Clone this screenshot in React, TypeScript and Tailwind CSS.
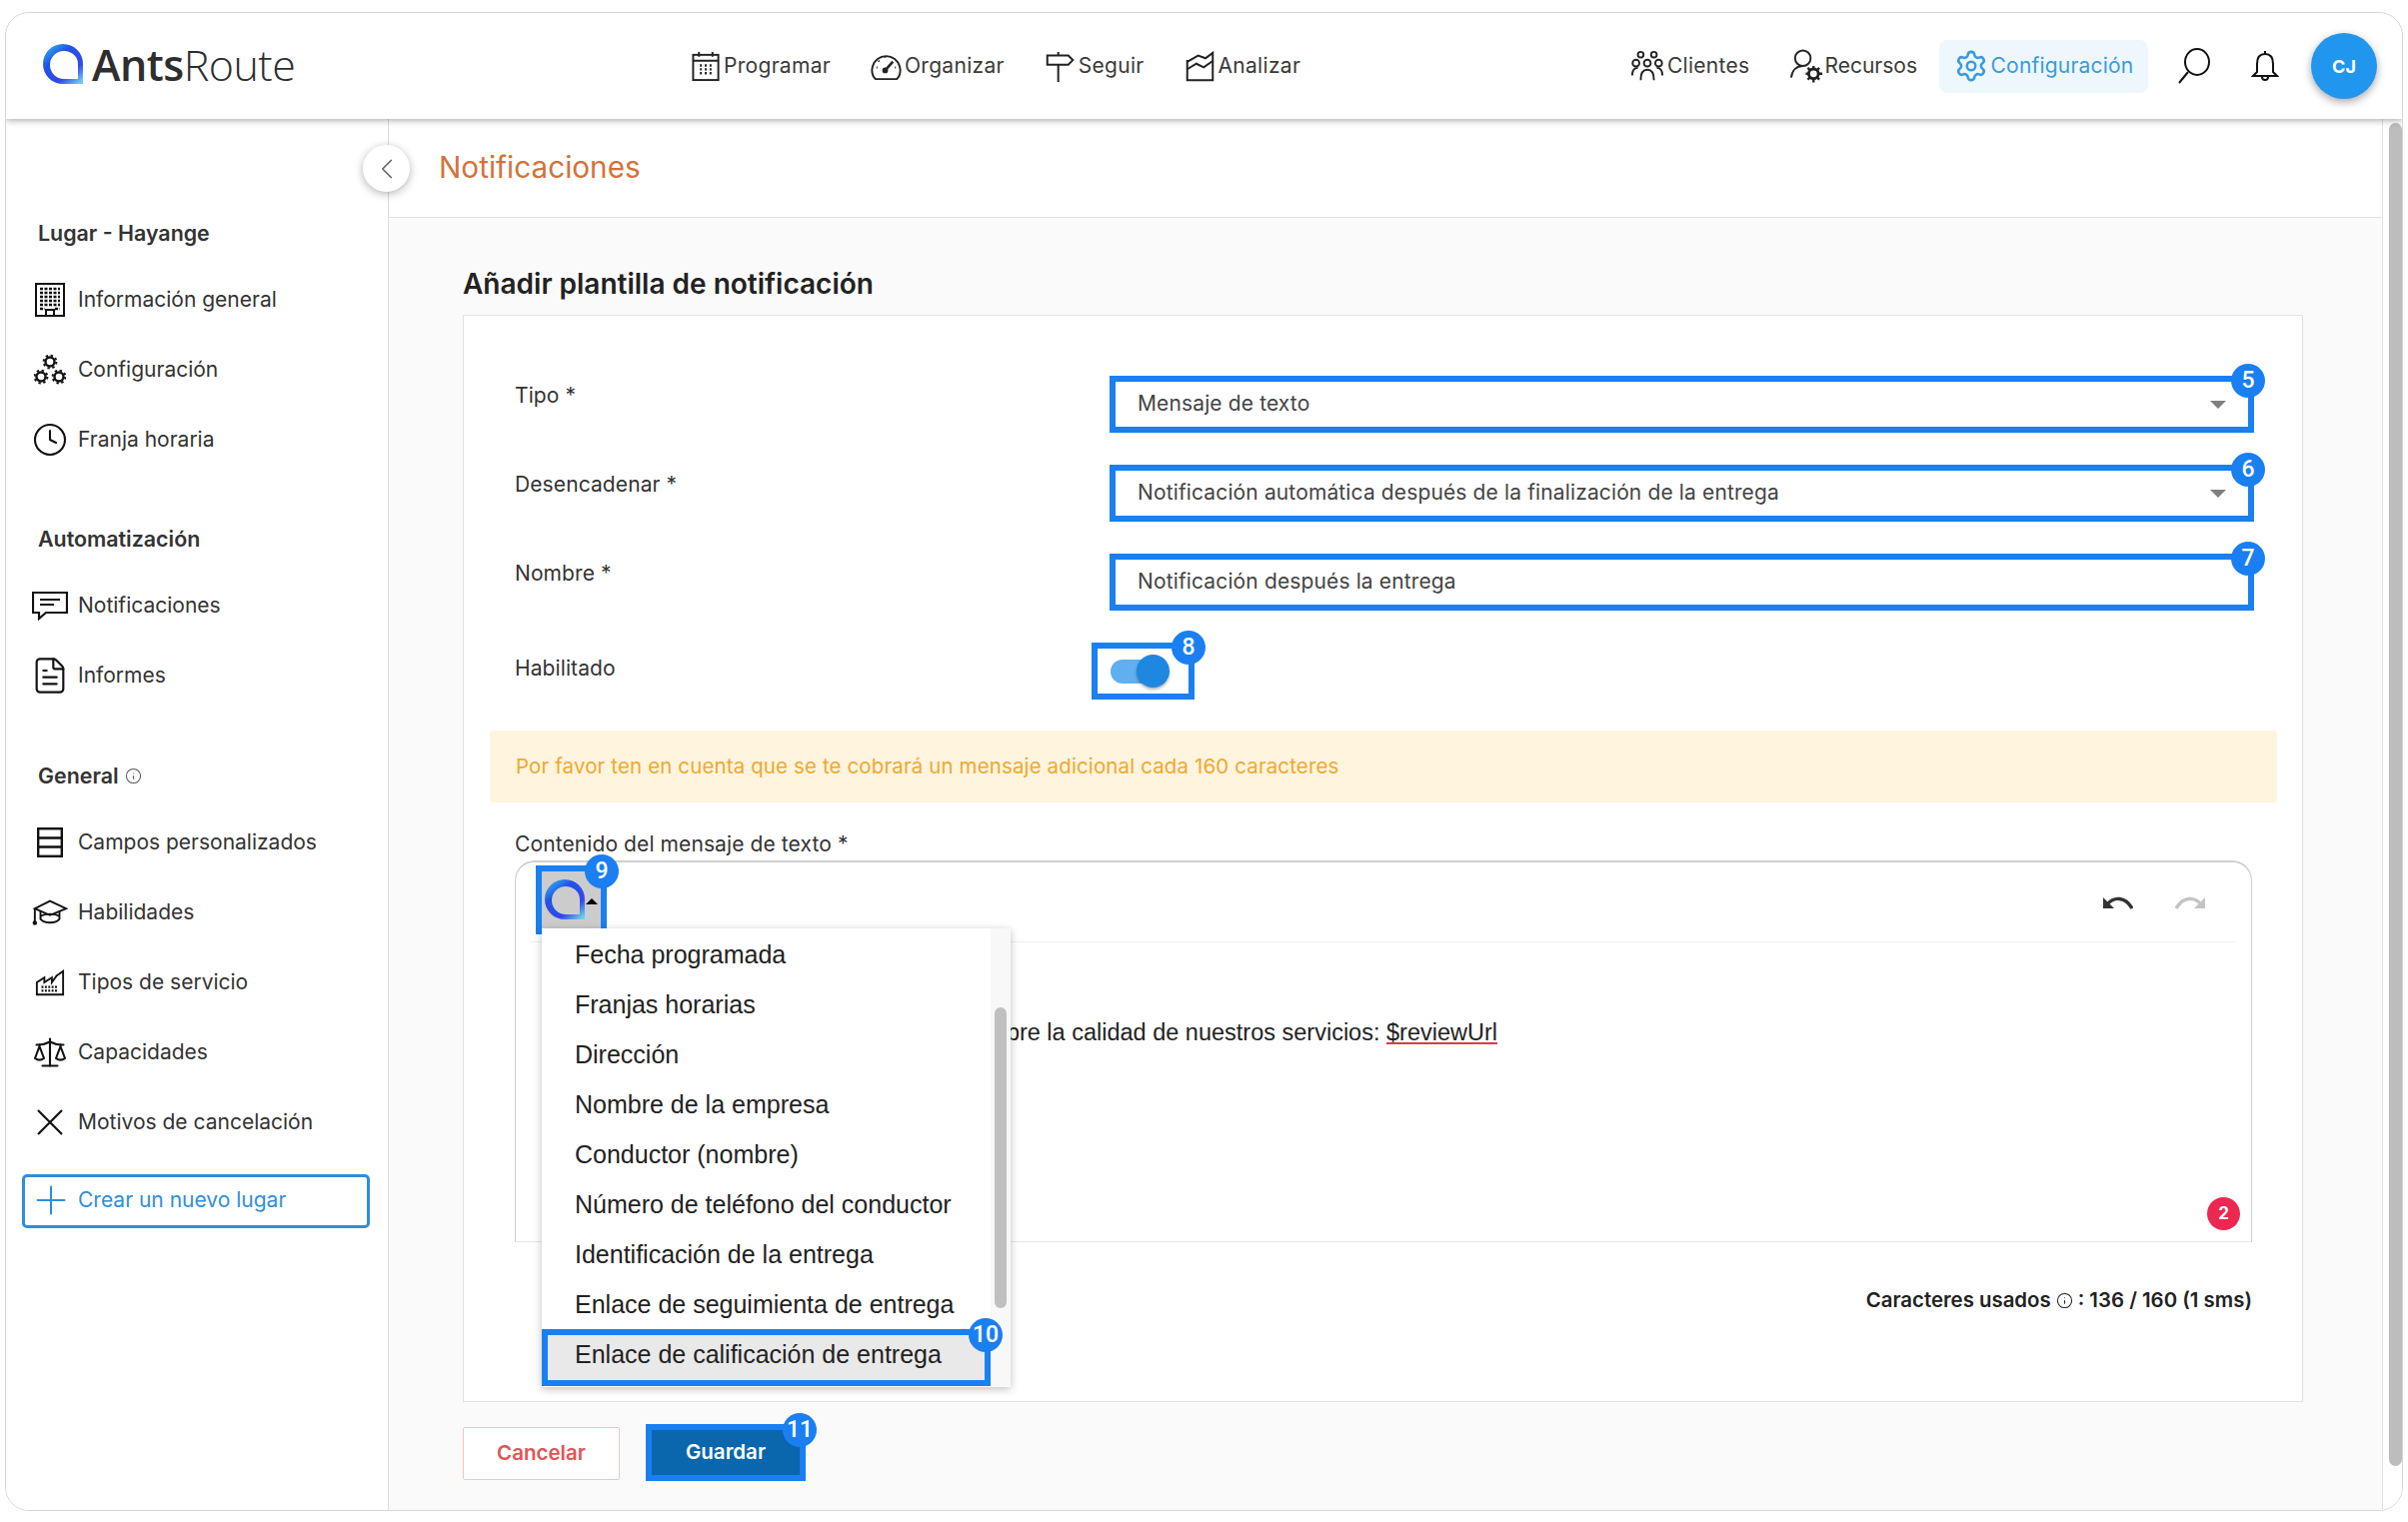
import { ChevronLeft, Clock, FileText, Info, Plus, Scale, Settings } from "lucide-react";
import type { ReactNode } from "react";

function LogoMark({ className, id }: { className: string; id: string }) {
  return (
    <svg viewBox="0 0 40 41" className={className}>
      <defs>
        <linearGradient id={id} x1="0.1" y1="0" x2="0.9" y2="1">
          <stop offset="0" stopColor="#2cc0ee" />
          <stop offset="0.32" stopColor="#2452e6" />
          <stop offset="0.72" stopColor="#3248ea" />
          <stop offset="1" stopColor="#6fd0f0" />
        </linearGradient>
      </defs>
      <path
        fillRule="evenodd"
        fill={`url(#${id})`}
        d="M20 0 A20 20 0 0 1 40 20 V40 H20 A20 20 0 0 1 20 0 Z M21 7 A13.5 13.5 0 0 0 21 35 H35 V20 A14 13 0 0 0 21 7 Z"
      />
    </svg>
  );
}

function Badge({ n, className }: { n: string; className: string }) {
  return (
    <span className={`absolute z-20 flex h-[34px] w-[34px] items-center justify-center rounded-full bg-[#1a7ff0] font-['Roboto',sans-serif] text-[23px] font-medium tracking-normal text-white ${className}`}>
      {n}
    </span>
  );
}

function NavItem({ icon, label, className = "", textClass = "tracking-[0.3px]" }: { icon: ReactNode; label: string; className?: string; textClass?: string }) {
  return (
    <div className={`flex items-center text-[21px] text-[#3a3a3a] ${className}`}>
      {icon}
      <span className={textClass}>{label}</span>
    </div>
  );
}

const CalendarIcon = (
  <svg viewBox="0 0 30 32" className="mr-[3px] h-[31px] w-[30px]" fill="none" stroke="#222" strokeWidth="2">
    <rect x="2" y="4" width="26" height="26" />
    <path d="M2 10h26M8 1v5M22 1v5" />
    <path d="M9 15h2M14 15h2M19 15h2M9 19h2M14 19h2M19 19h2M9 23h2M14 23h2M19 23h2" strokeWidth="2.4" />
  </svg>
);
const GaugeIcon = (
  <svg viewBox="0 0 32 32" className="mr-[3px] h-[31px] w-[31px]" fill="none" stroke="#222" strokeWidth="2">
    <path d="M5 29 C1 25 1 20 2 16 A14.5 14.5 0 0 1 30 16 C31 20 31 25 27 29 Z" />
    <path d="M15 20 L23 11" strokeWidth="2.6" />
    <circle cx="15" cy="20" r="2" fill="#222" />
    <path d="M6 17h1M8 10l1 1M15 6v1M25 17h1" />
  </svg>
);
const SignIcon = (
  <svg viewBox="0 0 32 34" className="mr-[3px] h-[31px] w-[31px]" fill="none" stroke="#222" strokeWidth="2.2">
    <path d="M2 5 H25 L30 10 L25 15 H2 Z" />
    <path d="M14 1v4M14 15v19" />
  </svg>
);
const AreaIcon = (
  <svg viewBox="0 0 32 34" className="mr-[3px] h-[31px] w-[31px]" fill="none" stroke="#222" strokeWidth="2.2">
    <path d="M2 10 V32 H30 V2 L22 8 L14 5 L2 12" />
    <path d="M2 20 L12 14 L20 18 L30 11" />
  </svg>
);
const PeopleIcon = (
  <svg viewBox="0 0 36 32" className="mr-[3px] h-[32px] w-[34px]" fill="none" stroke="#222" strokeWidth="2">
    <circle cx="11" cy="4" r="3" />
    <circle cx="25" cy="4" r="3" />
    <circle cx="18" cy="13" r="3.6" />
    <circle cx="6" cy="13" r="3.6" />
    <circle cx="30" cy="13" r="3.6" />
    <path d="M2 26 C2 20 5 18 8 18 M34 26 C34 20 31 18 28 18 M11 31 C11 23 14 20 18 20 C22 20 25 23 25 31" />
  </svg>
);
const PersonGearIcon = (
  <svg viewBox="0 0 36 36" className="h-[36px] w-[35px]" fill="none" stroke="#222" strokeWidth="2">
    <circle cx="14" cy="10" r="8" />
    <path d="M2 30 C3 22 8 18 14 18" />
    <circle cx="25" cy="26" r="5" strokeWidth="3" />
    <path d="M25 18v3M25 31v4M17 26h3M30 26h4M19 20l2 2M29 30l2 2M31 20l-2 2M21 30l-2 2" strokeWidth="2.4" />
  </svg>
);
const SearchIcon = (
  <svg viewBox="0 0 34 36" className="ml-[29px] h-[36px] w-[34px]" fill="none" stroke="#111" strokeWidth="2">
    <ellipse cx="20" cy="14" rx="12" ry="13" />
    <path d="M11 24 L2 35" />
  </svg>
);
const BellIcon = (
  <svg viewBox="0 0 28 33" className="ml-[40px] h-[33px] w-[28px]" fill="none" stroke="#111" strokeWidth="2">
    <path d="M14 1 V4 M14 4 C8 4 6 9 6 14 V22 L2 26 H26 L22 22 V14 C22 9 20 4 14 4 Z" />
    <path d="M11 27 a3 3 0 0 0 6 0" />
  </svg>
);

const BuildingIcon = (
  <svg viewBox="0 0 30 34" className="h-[34px] w-[30px]" fill="none" stroke="#111" strokeWidth="2">
    <rect x="1" y="1" width="28" height="32" />
    <path d="M5 6h20M5 10h20M5 14h20M5 18h20M5 22h20M5 26h5M20 26h5" strokeWidth="2.4" strokeDasharray="3 1.5" />
    <path d="M11 33v-6h8v6" />
  </svg>
);
const CogsIcon = (
  <svg viewBox="0 0 32 32" className="h-[32px] w-[32px]" fill="none" stroke="#111">
    <circle cx="16" cy="8" r="4.5" strokeWidth="2.4" />
    <circle cx="7" cy="23" r="4.5" strokeWidth="2.4" />
    <circle cx="25" cy="23" r="4.5" strokeWidth="2.4" />
    <circle cx="16" cy="8" r="6.4" strokeWidth="2" strokeDasharray="2.4 2.6" />
    <circle cx="7" cy="23" r="6.4" strokeWidth="2" strokeDasharray="2.4 2.6" />
    <circle cx="25" cy="23" r="6.4" strokeWidth="2" strokeDasharray="2.4 2.6" />
  </svg>
);
const ChatIcon = (
  <svg viewBox="0 0 36 30" className="h-[30px] w-[36px]" fill="none" stroke="#111" strokeWidth="2.2">
    <path d="M1 2 H35 V22 H14 L7 28 V22 H1 Z" />
    <path d="M8 9h20M8 14h14" />
  </svg>
);
const RowsIcon = (
  <svg viewBox="0 0 26 30" className="h-[30px] w-[26px]" fill="none" stroke="#111" strokeWidth="2.4">
    <rect x="1.2" y="1.2" width="23.6" height="27.6" />
    <path d="M1 10.5h24M1 19.5h24" />
  </svg>
);
const CapIcon = (
  <svg viewBox="0 0 38 28" className="h-[28px] w-[38px]" fill="none" stroke="#111" strokeWidth="2">
    <path d="M19 2 L36 10 L19 17 L3 10 Z" />
    <path d="M9 13 V21 C13 26 25 26 29 21 V13" />
    <path d="M9 18 C14 15 24 15 29 18" />
    <path d="M3 10 V24" />
    <circle cx="3" cy="25" r="1.4" fill="#111" />
  </svg>
);
const FactoryIcon = (
  <svg viewBox="0 0 32 30" className="h-[30px] w-[30px]" fill="none" stroke="#111" strokeWidth="2">
    <path d="M2 28 V15 L10 10 V15 L18 10 V15 L23 8 L30 3 V28 Z" />
    <path d="M7 20h18M7 24h18" strokeWidth="2.4" strokeDasharray="2 1.6" />
  </svg>
);
const CrossIcon = (
  <svg viewBox="0 0 26 26" className="h-[26px] w-[26px]" fill="none" stroke="#111" strokeWidth="2.2">
    <path d="M1 1 L25 25 M25 1 L1 25" />
  </svg>
);

function SideItem({ icon, label }: { icon: ReactNode; label: string }) {
  return (
    <div className="flex h-[70px] items-center gap-[10px] pl-[26px]">
      <span className="flex w-[36px] justify-center">{icon}</span>
      <span className="text-[21px] text-[#333]">{label}</span>
    </div>
  );
}

function SideTitle({ children, className = "" }: { children: ReactNode; className?: string }) {
  return (
    <div className={`flex h-[40px] items-center gap-[6px] pl-[32px] text-[21.4px] font-semibold text-[#333] ${className}`}>
      {children}
    </div>
  );
}

function FormRow({ label, top = "pt-[8px]", children }: { label: string; top?: string; children: ReactNode }) {
  return (
    <div className="flex items-start">
      <div className={`w-[646px] pl-[51px] text-[21px] leading-[24px] tracking-[0.1px] text-[#333] ${top}`}>{label}</div>
      {children}
    </div>
  );
}

function Field({ value, n, caret = true }: { value: string; n: string; caret?: boolean }) {
  return (
    <div className="relative flex h-[57px] w-[1145px] items-center justify-between border-[6px] border-[#1a7ff0] bg-white px-[22px] text-[21px] tracking-[0.13px] text-[#444]">
      <span className="mt-[-2px]">{value}</span>
      {caret && <span className="h-0 w-0 border-x-[8px] border-t-[8px] border-x-transparent border-t-[#808080]" />}
      <Badge n={n} className="right-[-17px] top-[-18px]" />
    </div>
  );
}

const tags = [
  "Fecha programada",
  "Franjas horarias",
  "Dirección",
  "Nombre de la empresa",
  "Conductor (nombre)",
  "Número de teléfono del conductor",
  "Identificación de la entrega",
  "Enlace de seguimienta de entrega",
];

export default function App() {
  return (
    <div className="h-[1523px] w-[2409px] overflow-hidden bg-white px-[5px] pt-[12px] font-['Inter',sans-serif]">
      <div className="flex h-[1500px] w-[2399px] flex-col overflow-hidden rounded-[24px] border border-[#d6d6d6]">
        {/* top bar */}
        <header className="relative z-10 flex h-[106px] shrink-0 items-center bg-white shadow-[0_2px_6px_rgba(0,0,0,0.3)]">
          <div className="mb-[4px] flex w-[685px] items-center pl-[37px]">
            <LogoMark id="logo-top" className="h-[41px] w-[40px]" />
            <span className="ml-[9px] font-['Open_Sans',sans-serif] text-[43px] leading-none tracking-[-0.5px] text-[#2e2e2e]">
              <span className="font-semibold">Ants</span>
              <span className="font-light">Route</span>
            </span>
          </div>
          <div className="flex items-center gap-[40px]">
            <NavItem icon={CalendarIcon} label="Programar" />
            <NavItem icon={GaugeIcon} label="Organizar" />
            <NavItem icon={SignIcon} label="Seguir" />
            <NavItem icon={AreaIcon} label="Analizar" />
          </div>
          <div className="ml-auto flex items-center pr-[25px]">
            <NavItem icon={PeopleIcon} label="Clientes" />
            <NavItem icon={PersonGearIcon} label="Recursos" className="ml-[40px]" textClass="tracking-normal" />
            <div className="ml-[22px] flex h-[53px] w-[209px] items-center justify-center gap-[3px] rounded-[8px] bg-[#eef7fd] text-[21px] tracking-[0.2px] text-[#3a9bdc]">
              <Settings className="h-[34px] w-[34px]" strokeWidth={1.8} />
              <span>Configuración</span>
            </div>
            {SearchIcon}
            {BellIcon}
            <div className="ml-[32px] flex h-[66px] w-[66px] items-center justify-center rounded-full bg-[#2196ee] text-[18px] font-bold text-white shadow-[0_3px_8px_rgba(0,0,0,0.35)]">
              CJ
            </div>
          </div>
        </header>

        <div className="flex min-h-0 flex-1">
          {/* side menu */}
          <aside className="relative w-[383px] shrink-0 border-r border-[#dcdcdc] bg-white pt-[94px]">
            <button className="absolute right-[-22px] top-[26px] z-10 flex h-[47px] w-[47px] items-center justify-center rounded-full bg-white shadow-[0_2px_8px_rgba(0,0,0,0.3)]">
              <ChevronLeft className="h-[34px] w-[34px] text-[#666]" strokeWidth={1.2} />
            </button>
            <SideTitle>Lugar - Hayange</SideTitle>
            <div className="mt-[12px]">
              <SideItem icon={BuildingIcon} label="Información general" />
              <SideItem icon={CogsIcon} label="Configuración" />
              <SideItem icon={<Clock className="h-[36px] w-[36px] text-[#111]" strokeWidth={1.4} />} label="Franja horaria" />
            </div>
            <SideTitle className="mt-[44px]">Automatización</SideTitle>
            <div className="mt-[12px]">
              <SideItem icon={ChatIcon} label="Notificaciones" />
              <SideItem icon={<FileText className="h-[40px] w-[40px] shrink-0 text-[#111]" strokeWidth={1.3} />} label="Informes" />
            </div>
            <SideTitle className="mt-[45px]">
              General <Info className="h-[17px] w-[17px] text-[#555]" strokeWidth={1.5} />
            </SideTitle>
            <div className="mt-[12px]">
              <SideItem icon={RowsIcon} label="Campos personalizados" />
              <SideItem icon={CapIcon} label="Habilidades" />
              <SideItem icon={FactoryIcon} label="Tipos de servicio" />
              <SideItem icon={<Scale className="h-[36px] w-[36px] text-[#111]" strokeWidth={1.4} />} label="Capacidades" />
              <SideItem icon={CrossIcon} label="Motivos de cancelación" />
            </div>
            <button className="ml-[16px] mt-[17px] flex h-[54px] w-[348px] items-center gap-[4px] rounded-[5px] border-[3px] border-[#2f8fd8] pb-[2px] pl-[3px] text-[21px] text-[#2f8fd8]">
              <Plus className="h-[46px] w-[46px]" strokeWidth={1.1} />
              Crear un nuevo lugar
            </button>
          </aside>

          {/* main */}
          <main className="flex min-w-0 flex-1 flex-col border-r border-[#e2e2e2] bg-[#fafafa]">
            <div className="flex h-[99px] shrink-0 items-center border-b border-[#e2e2e2] bg-white pb-[2px] pl-[50px] text-[29.7px] text-[#d2733a]">
              Notificaciones
            </div>
            <div className="pl-[74px]">
              <h2 className="mt-[49px] text-[28px] font-semibold leading-[34px] text-[#222]">Añadir plantilla de notificación</h2>
              <section className="mt-[14px] h-[1088px] w-[1841px] border border-[#e2e2e2] bg-white pt-[60px]">
                <div className="flex flex-col gap-[32px]">
                  <FormRow label="Tipo *">
                    <Field value="Mensaje de texto" n="5" />
                  </FormRow>
                  <FormRow label="Desencadenar *">
                    <Field value="Notificación automática después de la finalización de la entrega" n="6" />
                  </FormRow>
                  <FormRow label="Nombre *">
                    <Field value="Notificación después la entrega" n="7" caret={false} />
                  </FormRow>
                  <FormRow label="Habilitado" top="pt-[14px]">
                    <div className="relative ml-[-18px] flex h-[57px] w-[103px] items-center border-[6px] border-[#1a7ff0] bg-white pl-[13px]">
                      <div className="relative h-[24px] w-[50px] rounded-full bg-[#5eb0f0]">
                        <div className="absolute right-[-9px] top-[-5px] h-[33px] w-[33px] rounded-full bg-[#1e88e0] shadow-[0_2px_3px_rgba(0,0,0,0.3)]" />
                      </div>
                      <Badge n="8" className="right-[-17px] top-[-18px]" />
                    </div>
                  </FormRow>
                </div>

                <div className="ml-[26px] mt-[31px] flex h-[72px] w-[1788px] items-center rounded-[4px] bg-[#fff4de] pl-[26px] text-[20.5px] tracking-[0.12px] text-[#f0a92e]">
                  Por favor ten en cuenta que se te cobrará un mensaje adicional cada 160 caracteres
                </div>

                <div className="ml-[51px] mt-[30px] text-[21px] leading-[24px] tracking-[0.1px] text-[#333]">Contenido del mensaje de texto *</div>

                {/* editor */}
                <div className="relative ml-[51px] mt-[4px] h-[382px] w-[1738px] rounded-t-[20px] border-x border-b border-t-2 border-x-[#cfcfcf] border-b-[#e6e6e6] border-t-[#cfcfcf]">
                  <div className="mx-[14px] flex h-[80px] items-start justify-between border-b border-[#efefef]">
                    <div className="relative ml-[6px] mt-[3px] flex h-[69px] w-[71px] items-center border-[6px] border-[#1a7ff0] bg-[#cccccc] pl-[3px]">
                      <LogoMark id="logo-editor" className="h-[41px] w-[40px]" />
                      <span className="ml-[1px] mt-[2px] h-0 w-0 border-x-[6px] border-b-[6px] border-x-transparent border-b-black" />
                      <Badge n="9" className="right-[-18px] top-[-17px]" />
                    </div>
                    <div className="mr-[32px] mt-[34px] flex gap-[42px]">
                      <svg viewBox="0 0 30 13" className="h-[13px] w-[30px]" fill="none">
                        <path d="M0 1 V12 H11 Z" fill="#333" />
                        <path d="M4 8 C11 0 22 0 29 12" stroke="#333" strokeWidth="3.4" />
                      </svg>
                      <svg viewBox="0 0 30 13" className="h-[13px] w-[30px] -scale-x-100" fill="none">
                        <path d="M0 1 V12 H11 Z" fill="#c4c4c4" />
                        <path d="M4 8 C11 0 22 0 29 12" stroke="#c4c4c4" strokeWidth="3.4" />
                      </svg>
                    </div>
                  </div>
                  <div className="flex w-[982px] justify-end overflow-hidden whitespace-nowrap pt-[75px] font-['Liberation_Sans',sans-serif] text-[23.5px] leading-[30px] text-[#222]">
                    <span>
                      Por favor, danos tu opinión sobre la calidad de nuestros servicios:{" "}
                      <span className="underline decoration-[#e0394a] decoration-2 underline-offset-2">$reviewUrl</span>
                    </span>
                  </div>
                  <span className="absolute bottom-[11px] right-[11px] flex h-[33px] w-[33px] items-center justify-center rounded-full bg-[#ec2752] text-[17px] font-bold text-white">
                    2
                  </span>

                  {/* dropdown over the editor */}
                  <div className="absolute left-[26px] top-[66px] z-10 flex h-[459px] w-[469px] bg-white font-['Liberation_Sans',sans-serif] text-[25px] text-[#222] shadow-[0_2px_8px_rgba(0,0,0,0.25)]">
                    <div className="w-[446px] pt-[2px]">
                      {tags.map((t) => (
                        <div key={t} className="flex h-[50px] items-center pl-[33px]">
                          {t}
                        </div>
                      ))}
                      <div className="relative mt-[-1px] flex h-[57px] w-[449px] items-center border-[6px] border-[#1a7ff0] bg-[#e9e9e9] pb-[5px] pl-[27px]">
                        Enlace de calificación de entrega
                        <Badge n="10" className="right-[-18px] top-[-17px]" />
                      </div>
                    </div>
                    <div className="ml-[3px] flex-1 bg-[#f8f8f8] pt-[79px]">
                      <div className="ml-[4px] h-[301px] w-[12px] rounded-full bg-[#c0c0c0]" />
                    </div>
                  </div>
                </div>

                <div className="ml-[51px] mt-[46px] flex w-[1738px] items-center justify-end gap-[5px] text-[20.4px] font-semibold leading-[24px] text-[#222]">
                  Caracteres usados <Info className="h-[17px] w-[17px]" strokeWidth={1.5} /> : 136 / 160 (1 sms)
                </div>
              </section>

              <div className="mt-[22px] flex items-start">
                <button className="mt-[3px] h-[53px] w-[157px] rounded-[2px] border border-[#f4c4c4] bg-white text-[20.5px] font-semibold text-[#e25555]">
                  Cancelar
                </button>
                <button className="relative ml-[26px] h-[57px] w-[160px] border-[6px] border-[#1a7ff0] bg-[#0a66ad] text-[20.5px] font-semibold text-white">
                  Guardar
                  <Badge n="11" className="right-[-17px] top-[-17px]" />
                </button>
              </div>
            </div>
          </main>

          {/* page scrollbar */}
          <div className="w-[19px] shrink-0 bg-white pl-[6px] pt-[4px]">
            <div className="h-[1344px] w-[13px] rounded-full bg-[#bdbdbd]" />
          </div>
        </div>
      </div>
    </div>
  );
}
